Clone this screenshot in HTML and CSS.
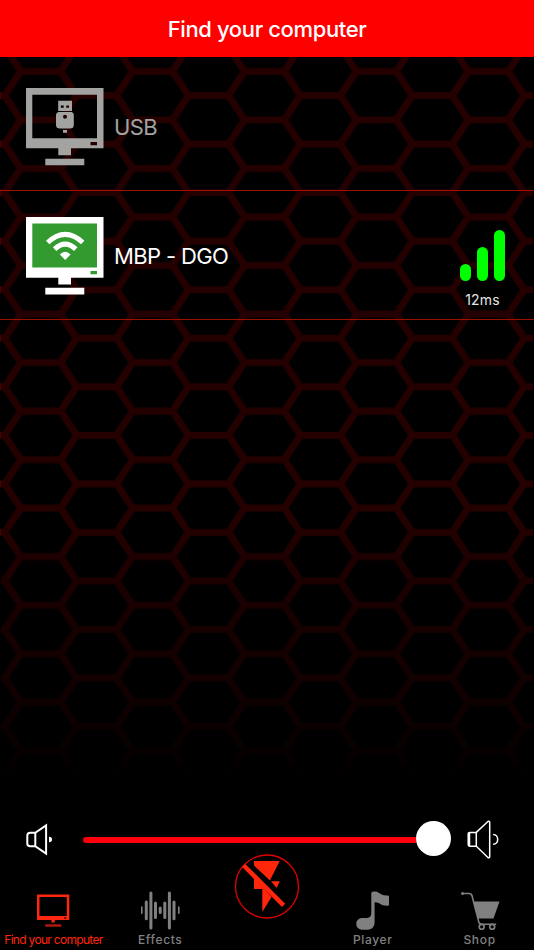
FILE: index.html
```html
<!DOCTYPE html>
<html lang="en">
<head>
<meta charset="utf-8">
<title>Find your computer</title>
<link rel="stylesheet" href="styles.css">
</head>
<body>
<div class="app">
  <svg class="backdrop" width="534" height="950" viewBox="0 0 534 950" aria-hidden="true">
    <defs>
      <pattern id="hex" x="4.7" y="71.35" width="111.9" height="48.53" patternUnits="userSpaceOnUse">
        <path d="M0 -24.26L16 0L0 24.26L16 48.53L0 72.8M16 0H55.9M16 48.53H55.9M71.9 -24.26L55.9 0L71.9 24.26L55.9 48.53L71.9 72.8M71.9 24.26H111.9M127.9 0L111.9 24.26L127.9 48.53M-40 24.26H0" fill="none" stroke="#240000" stroke-width="7"/>
      </pattern>
      <pattern id="edge" x="0" y="92" width="1" height="48.53" patternUnits="userSpaceOnUse">
        <rect width="1" height="7" fill="#4c0000"/>
      </pattern>
      <linearGradient id="fade" x1="0" y1="0" x2="0" y2="1">
        <stop offset="0" stop-color="#000" stop-opacity="0"/>
        <stop offset=".3" stop-color="#000" stop-opacity=".27"/>
        <stop offset=".65" stop-color="#000" stop-opacity=".5"/>
        <stop offset="1" stop-color="#000" stop-opacity=".88"/>
      </linearGradient>
    </defs>
    <rect x="1" y="57" width="532" height="715" fill="url(#hex)"/>
    <rect y="57" width="1" height="480" fill="url(#edge)"/>
    <rect y="520" width="534" height="252" fill="url(#fade)"/>
  </svg>

  <header class="header"><h1 class="title">Find your computer</h1></header>

  <main class="list">
    <section class="row row-usb">
      <svg class="computer" width="78" height="78" viewBox="0 0 78 78">
        <path fill="#a3a3a1" fill-rule="evenodd" d="M0 0H77.5V60.3H45V67.3H32.3V60.3H0ZM6.3 6.7V50.3H71V6.7ZM64.5 54V57.2H71V54ZM19.3 70.7H58.3V77.3H19.3Z"/>
        <path fill="#a3a3a1" fill-rule="evenodd" d="M32.2 12.7H46V23H32.2ZM34.8 17.5V19.7H37.7V17.5ZM40.2 17.5V19.7H43V17.5ZM32.5 24H45.7Q47.8 24.3 47.8 27V37Q47.8 40.6 44 40.6H34Q30 40.6 30 37V27Q30 24.3 32.5 24ZM41 28.7A2 2 0 1 0 37 28.7A2 2 0 1 0 41 28.7ZM37 42H41V44.7H37Z"/>
      </svg>
      <span class="name">USB</span>
    </section>
    <section class="row">
      <svg class="computer" width="78" height="78" viewBox="0 0 78 78">
        <path fill="#fff" d="M0 0H77.5V60.7H45V67.5H32.3V60.7H0ZM19.3 70.7H58.3V77.5H19.3Z"/>
        <path fill="#339a30" d="M6.3 6.5H71V50.5H6.3ZM64.5 54H71V57.2H64.5Z"/>
        <path d="M21.7 25.5Q39.2 9.3 56.7 25.5M28.6 32.1Q39.2 22 49.8 32.1" fill="none" stroke="#fff" stroke-width="5"/>
        <path d="M33.8 37.6Q39.2 32 44.6 37.6L39.2 43Z" fill="#fff"/>
      </svg>
      <span class="name">MBP - DGO</span>
      <div class="signal">
        <div class="bars"><i class="bar low"></i><i class="bar mid"></i><i class="bar high"></i></div>
        <span class="latency">12ms</span>
      </div>
    </section>
  </main>

  <section class="volume">
    <svg class="quiet" width="28" height="34" viewBox="0 0 28 34" fill="none" stroke="#fff" stroke-width="2">
      <path d="M9.3 9.7H4.2Q1.3 9.7 1.3 12.7V20.5Q1.3 23.3 4.2 23.3H9.3M9.3 9.7V23.3L20.1 30.6V2.4Z"/>
      <path d="M23 13.8V19.3Q26 19.3 26 16.6T23 13.8Z" fill="#fff" stroke="none"/>
    </svg>
    <div class="slider"><div class="track"></div><div class="thumb"></div></div>
    <svg class="loud" width="34" height="40" viewBox="0 0 34 40" fill="none" stroke="#fff" stroke-width="1.5">
      <path d="M9.8 12.4H2.6Q1.2 12.4 1.2 13.8V24.8Q1.2 26.2 2.6 26.2H9.8M2.5 12.8V26M9.3 12.6V26.1M9.3 12.4L20.9 1.5Q22.7 .5 22.7 2.6V36.4Q22.7 38.5 20.9 37.5L9.3 26.2M26.1 14.6C32.2 14.6 32.2 24.2 26.1 24.2"/>
    </svg>
  </section>

  <nav class="tabs">
    <div class="tab active">
      <svg width="39" height="39" viewBox="0 0 39 39">
        <path fill="#ff2610" fill-rule="evenodd" d="M3 3.5H35.3V29H20.8V31.5H17.5V29H3ZM5.5 6V25H32.8V6ZM30 26.5V27.5H32.3V26.5Z"/>
        <path fill="#b71810" d="M11.2 33.3H27.3V35.7H11.2Z"/>
      </svg>
      <span class="label">Find your computer</span>
    </div>
    <div class="tab">
      <svg width="40" height="39" viewBox="0 0 40 39" fill="none" stroke="#808080" stroke-width="3" stroke-linecap="round">
        <path d="M1.8 16V22.3M38.8 16V22.3" stroke-width="1.6"/>
        <path d="M6.3 11V27.8M10.9 2V37M15.5 12V26.5M20.2 17V21.5M24.8 12V26.5M29.4 2V37M34 11V27.8"/>
      </svg>
      <span class="label">Effects</span>
    </div>
    <div class="tab flash">
      <svg width="66" height="66" viewBox="0 0 66 66">
        <circle cx="33" cy="32.5" r="31.5" fill="none" stroke="#e00000" stroke-width="1.3"/>
        <path fill="#ff260b" d="M20 7H45.7L35.9 26.5L20 11.5ZM37 27.3H45.8L42.6 34ZM20 23.5L37.5 43L28.3 58V35H20Z"/>
        <path d="M9.7 11.5L49.6 51.3" stroke="#ff260b" stroke-width="4.5"/>
      </svg>
    </div>
    <div class="tab right">
      <svg width="39" height="39" viewBox="0 0 39 39">
        <path fill="#808080" d="M18.3 2.5C18.3.7 20 .3 22.2.6C27 1.2 27.5 5 34.5 4.5Q36 4.5 36 5.7V13.5Q36 14.8 34.5 14.7C28 15 26.5 11 21.6 11.2V31C21.6 36.3 18.6 38.8 13.3 38.8H9.8C5.8 38.8 3.3 36.3 3.3 32.8C3.3 29 6 27 10.4 27H14.2Q18.3 26.5 18.3 22Z"/>
      </svg>
      <span class="label">Player</span>
    </div>
    <div class="tab right">
      <svg width="40" height="39" viewBox="0 0 40 39">
        <path d="M3 2.5H8.7Q11.3 2.1 12.1 5L18.8 31Q19.5 33.3 22 33.3H35.5" fill="none" stroke="#808080" stroke-width="1.6" stroke-linecap="round"/>
        <circle cx="2.5" cy="2.5" r="1.5" fill="#808080"/>
        <path fill="#808080" d="M13 10.6H39.5L33.5 27.5H18.1Z"/>
        <g fill="#000" stroke="#808080" stroke-width="1.7"><circle cx="21.7" cy="35.8" r="2.5"/><circle cx="32.2" cy="35.8" r="2.5"/></g>
      </svg>
      <span class="label">Shop</span>
    </div>
  </nav>
</div>
</body>
</html>
```
FILE: styles.css
```css
* { box-sizing: border-box; }
body {
  margin: 0;
  background: #000;
  color: #fff;
  font-family: Inter, "Liberation Sans", sans-serif;
}
.app {
  position: relative;
  isolation: isolate;
  display: flex;
  flex-direction: column;
  width: 534px;
  height: 950px;
  overflow: hidden;
}
.backdrop {
  position: absolute;
  inset: 0;
  z-index: -1;
}
.header {
  display: flex;
  align-items: center;
  justify-content: center;
  height: 57px;
  background: #f00;
}
.title {
  margin: 0;
  font-size: 22px;
  font-weight: 550;
  letter-spacing: -.37px;
  line-height: 28px;
}
.list { flex: 1; }
.row {
  display: flex;
  align-items: flex-start;
  height: 129px;
  padding: 26px 29px 0 26px;
  border-bottom: 1px solid #a01000;
}
.row-usb {
  height: 134px;
  padding-top: 31px;
  color: #a3a3a1;
}
.computer { flex: none; }
.name {
  margin: 25px 0 0 10px;
  font-size: 22px;
  line-height: 28px;
  letter-spacing: -.65px;
}
.signal {
  display: flex;
  flex-direction: column;
  align-items: center;
  margin: 13px 0 0 auto;
}
.bars {
  display: flex;
  align-items: flex-end;
  gap: 6px;
  height: 51px;
}
.bar {
  width: 11px;
  border-radius: 6px;
  background: #0f0;
}
.low { height: 17px; }
.mid { height: 34px; }
.high { height: 51px; }
.latency {
  margin-top: 10px;
  font-size: 14px;
  line-height: 17px;
  letter-spacing: .2px;
  color: #e4e4e4;
}
.volume {
  display: flex;
  align-items: center;
  height: 60px;
  padding: 0 33px 0 26px;
}
.slider {
  display: flex;
  align-items: center;
  width: 368px;
  margin-left: 29px;
  margin-right: 16px;
}
.track {
  flex: 1;
  height: 6px;
  border-radius: 3px 0 0 3px;
  background: #fd000c;
}
.thumb {
  width: 35px;
  height: 35px;
  margin-top: -3px;
  border-radius: 50%;
  background: #fff;
}
.tabs {
  display: grid;
  grid-template-columns: repeat(5, 1fr);
  height: 80px;
  padding-top: 21px;
}
.tab {
  display: flex;
  flex-direction: column;
  align-items: center;
  color: #808080;
}
.right { padding-right: 2px; }
.tab svg { flex: none; }
.label {
  margin-top: 2px;
  font-size: 12px;
  font-weight: 500;
  line-height: 16px;
  letter-spacing: .65px;
  white-space: nowrap;
}
.active { color: #ff260b; }
.active .label {
  font-weight: 400;
  letter-spacing: -.7px;
}
.flash { margin-top: -37px; }
```
